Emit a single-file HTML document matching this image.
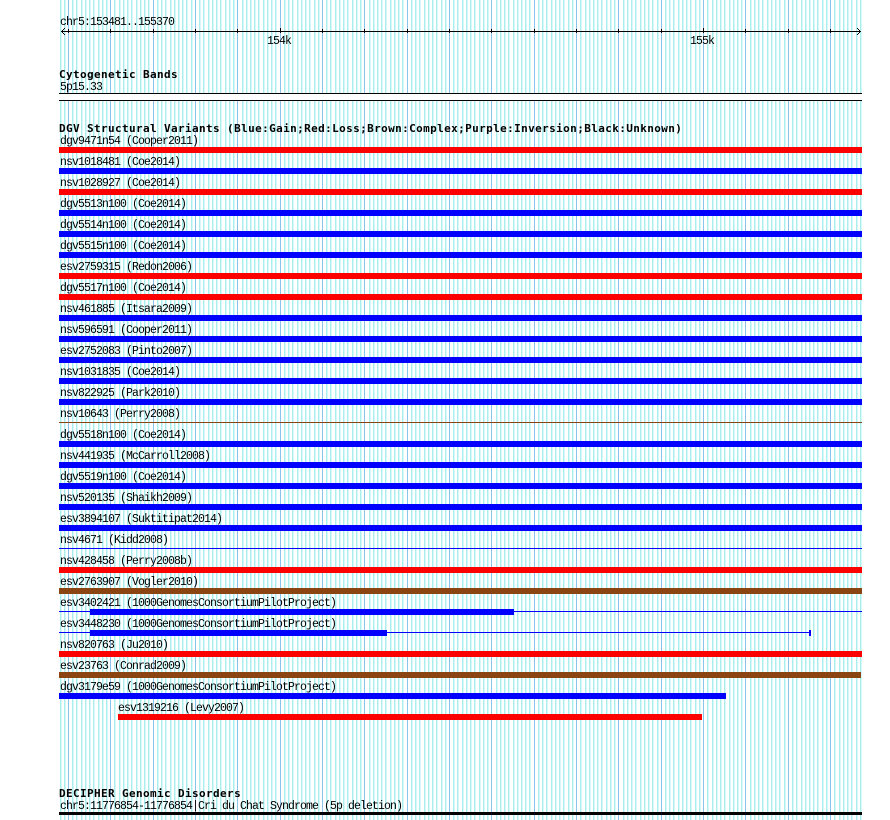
<!DOCTYPE html>
<html><head><meta charset="utf-8"><style>
html,body{margin:0;padding:0;background:#fff}
svg{display:block}
text{font-family:"Liberation Mono","DejaVu Sans Mono",monospace;font-size:11.5px;letter-spacing:-.9px;fill:#000}
text.b{font-family:"DejaVu Sans Mono","Liberation Mono",monospace;font-weight:bold;font-size:11px;letter-spacing:.38px}
</style></head><body>
<svg width="890" height="820" viewBox="0 0 890 820" xmlns="http://www.w3.org/2000/svg">
<rect width="890" height="820" fill="#fff"/>
<defs><path id="m" d="M60 0V820M64 0V820M72 0V820M76 0V820M81 0V820M85 0V820M89 0V820M93 0V820M98 0V820M102 0V820M106 0V820M114 0V820M119 0V820M123 0V820M127 0V820M131 0V820M136 0V820M140 0V820M144 0V820M148 0V820M157 0V820M161 0V820M165 0V820M170 0V820M174 0V820M178 0V820M182 0V820M186 0V820M191 0V820M199 0V820M203 0V820M208 0V820M212 0V820M216 0V820M220 0V820M225 0V820M229 0V820M233 0V820M242 0V820M246 0V820M250 0V820M254 0V820M258 0V820M263 0V820M267 0V820M271 0V820M275 0V820M284 0V820M288 0V820M292 0V820M297 0V820M301 0V820M305 0V820M309 0V820M314 0V820M318 0V820M326 0V820M330 0V820M335 0V820M339 0V820M343 0V820M347 0V820M352 0V820M356 0V820M360 0V820M369 0V820M373 0V820M377 0V820M381 0V820M385 0V820M390 0V820M394 0V820M398 0V820M402 0V820M411 0V820M415 0V820M419 0V820M424 0V820M428 0V820M432 0V820M436 0V820M441 0V820M445 0V820M453 0V820M457 0V820M462 0V820M466 0V820M470 0V820M474 0V820M479 0V820M483 0V820M487 0V820M496 0V820M500 0V820M504 0V820M508 0V820M513 0V820M517 0V820M521 0V820M525 0V820M529 0V820M538 0V820M542 0V820M546 0V820M551 0V820M555 0V820M559 0V820M563 0V820M568 0V820M572 0V820M580 0V820M585 0V820M589 0V820M593 0V820M597 0V820M601 0V820M606 0V820M610 0V820M614 0V820M623 0V820M627 0V820M631 0V820M635 0V820M640 0V820M644 0V820M648 0V820M652 0V820M657 0V820M665 0V820M669 0V820M673 0V820M678 0V820M682 0V820M686 0V820M690 0V820M695 0V820M699 0V820M707 0V820M712 0V820M716 0V820M720 0V820M724 0V820M729 0V820M733 0V820M737 0V820M741 0V820M750 0V820M754 0V820M758 0V820M762 0V820M767 0V820M771 0V820M775 0V820M779 0V820M784 0V820M792 0V820M796 0V820M801 0V820M805 0V820M809 0V820M813 0V820M817 0V820M822 0V820M826 0V820M834 0V820M839 0V820M843 0V820M847 0V820M851 0V820M856 0V820M860 0V820"/></defs>
<g shape-rendering="crispEdges" fill="none">
<use href="#m" transform="translate(1.5 0)" stroke="#d6f8f8" stroke-width="1"/>
<use href="#m" transform="translate(.5 0)" stroke="#aaeeee" stroke-width="1"/>
<path transform="translate(.5 0)" stroke="#88c4ec" stroke-width="1" d="M68 0V820M110 0V820M153 0V820M195 0V820M237 0V820M280 0V820M322 0V820M364 0V820M407 0V820M449 0V820M491 0V820M534 0V820M576 0V820M618 0V820M661 0V820M703 0V820M745 0V820M788 0V820M830 0V820"/>
<!-- axis -->
<path transform="translate(.5 0)" stroke="#000" stroke-width="1" d="M68 29V33M110 29V33M153 29V33M195 29V33M237 29V33M280 28V33M322 29V33M364 29V33M407 29V33M449 29V33M491 29V33M534 29V33M576 29V33M618 29V33M661 29V33M703 28V33M745 29V33M788 29V33M830 29V33"/>
<rect x="61" y="31" width="800" height="1" fill="#000"/>
<path fill="#000" d="M61 31h1v1h-1zM62 30h1v1h-1zM62 32h1v1h-1zM63 29h1v1h-1zM63 33h1v1h-1zM64 28h1v1h-1zM64 34h1v1h-1zM860 31h1v1h-1zM859 30h1v1h-1zM859 32h1v1h-1zM858 29h1v1h-1zM858 33h1v1h-1zM857 28h1v1h-1zM857 34h1v1h-1z"/>
<!-- band -->
<rect x="59" y="93" width="803" height="8" fill="#fff"/>
<rect x="59" y="93" width="803" height="1" fill="#000"/>
<rect x="59" y="100" width="803" height="1" fill="#000"/>
<!-- bars -->
<g fill="#f00">
<rect x="59" y="147" width="803" height="6"/><rect x="59" y="189" width="803" height="6"/><rect x="59" y="273" width="803" height="6"/><rect x="59" y="294" width="803" height="6"/><rect x="59" y="567" width="803" height="6"/><rect x="59" y="651" width="803" height="6"/><rect x="118" y="714" width="584" height="6"/>
</g>
<g fill="#00f">
<rect x="59" y="168" width="803" height="6"/><rect x="59" y="210" width="803" height="6"/><rect x="59" y="231" width="803" height="6"/><rect x="59" y="252" width="803" height="6"/><rect x="59" y="315" width="803" height="6"/><rect x="59" y="336" width="803" height="6"/><rect x="59" y="357" width="803" height="6"/><rect x="59" y="378" width="803" height="6"/><rect x="59" y="399" width="803" height="6"/><rect x="59" y="441" width="803" height="6"/><rect x="59" y="462" width="803" height="6"/><rect x="59" y="483" width="803" height="6"/><rect x="59" y="504" width="803" height="6"/><rect x="59" y="525" width="803" height="6"/>
<rect x="59" y="548" width="803" height="1"/>
<rect x="59" y="611" width="803" height="1"/><rect x="90" y="609" width="424" height="6"/>
<rect x="59" y="632" width="751" height="1"/><rect x="90" y="630" width="297" height="6"/><rect x="809" y="630" width="2" height="6"/>
<rect x="59" y="693" width="667" height="6"/>
</g>
<g fill="#8b4513">
<rect x="59" y="422" width="803" height="1"/><rect x="59" y="588" width="803" height="6"/><rect x="59" y="672" width="802" height="6"/>
</g>
<rect x="59" y="812" width="803" height="3" fill="#000"/>
</g>
<text x="60" y="25">chr5:153481..155370</text>
<text x="267" y="44">154k</text>
<text x="690" y="44">155k</text>
<text class="b" x="59" y="78">Cytogenetic Bands</text>
<text x="60" y="90">5p15.33</text>
<text class="b" x="59" y="132">DGV Structural Variants (Blue:Gain;Red:Loss;Brown:Complex;Purple:Inversion;Black:Unknown)</text>
<text x="60" y="144">dgv9471n54 (Cooper2011)</text>
<text x="60" y="165">nsv1018481 (Coe2014)</text>
<text x="60" y="186">nsv1028927 (Coe2014)</text>
<text x="60" y="207">dgv5513n100 (Coe2014)</text>
<text x="60" y="228">dgv5514n100 (Coe2014)</text>
<text x="60" y="249">dgv5515n100 (Coe2014)</text>
<text x="60" y="270">esv2759315 (Redon2006)</text>
<text x="60" y="291">dgv5517n100 (Coe2014)</text>
<text x="60" y="312">nsv461885 (Itsara2009)</text>
<text x="60" y="333">nsv596591 (Cooper2011)</text>
<text x="60" y="354">esv2752083 (Pinto2007)</text>
<text x="60" y="375">nsv1031835 (Coe2014)</text>
<text x="60" y="396">nsv822925 (Park2010)</text>
<text x="60" y="417">nsv10643 (Perry2008)</text>
<text x="60" y="438">dgv5518n100 (Coe2014)</text>
<text x="60" y="459">nsv441935 (McCarroll2008)</text>
<text x="60" y="480">dgv5519n100 (Coe2014)</text>
<text x="60" y="501">nsv520135 (Shaikh2009)</text>
<text x="60" y="522">esv3894107 (Suktitipat2014)</text>
<text x="60" y="543">nsv4671 (Kidd2008)</text>
<text x="60" y="564">nsv428458 (Perry2008b)</text>
<text x="60" y="585">esv2763907 (Vogler2010)</text>
<text x="60" y="606">esv3402421 (1000GenomesConsortiumPilotProject)</text>
<text x="60" y="627">esv3448230 (1000GenomesConsortiumPilotProject)</text>
<text x="60" y="648">nsv820763 (Ju2010)</text>
<text x="60" y="669">esv23763 (Conrad2009)</text>
<text x="60" y="690">dgv3179e59 (1000GenomesConsortiumPilotProject)</text>
<text x="118" y="711">esv1319216 (Levy2007)</text>
<text class="b" x="59" y="797">DECIPHER Genomic Disorders</text>
<text x="60" y="809">chr5:11776854-11776854|Cri du Chat Syndrome (5p deletion)</text>
</svg>
</body></html>
